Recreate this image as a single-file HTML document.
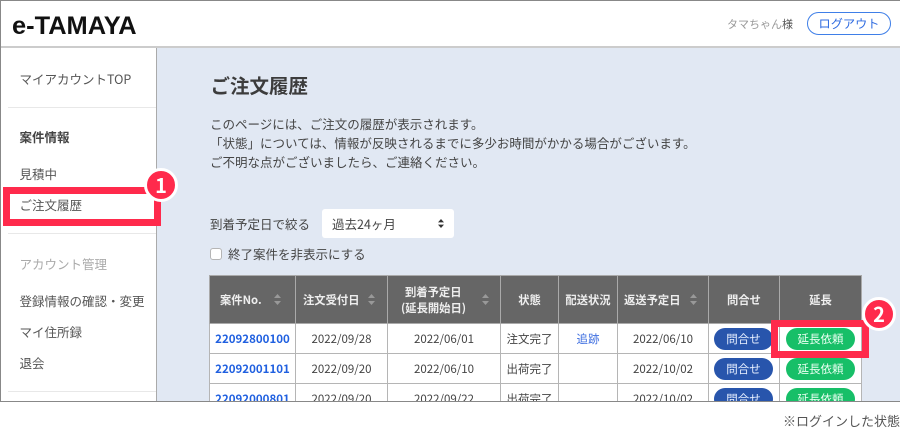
<!DOCTYPE html>
<html lang="ja"><head><meta charset="utf-8">
<style>
html,body{margin:0;padding:0;background:#fff}
body{width:900px;height:435px;position:relative;overflow:hidden;font-family:"Noto Sans CJK JP","Liberation Sans",sans-serif;color:#444}
.a{position:absolute;white-space:nowrap}
#frame{position:absolute;left:0;top:0;width:900px;height:402px;overflow:hidden;background:#fff}
#main{position:absolute;left:157px;top:48px;width:743px;height:354px;background:#e1e8f3}
.m{font-size:12.5px;line-height:19px;color:#444}
.hl{position:absolute;height:1px;background:#e8e8e8}
table{position:absolute;left:209px;top:275px;border-collapse:collapse;table-layout:fixed;width:652px;font-size:11.5px}
th{background:#666;color:#eee;font-weight:700;border:1px solid #aaa;height:48px;padding:0;font-size:11.3px;line-height:16px;position:relative;box-sizing:border-box}
td{background:#fff;border:1px solid #b5b5b5;height:30px;padding:0;text-align:center;color:#444;box-sizing:border-box;font-size:11.5px;line-height:16px}
td.n{font-weight:700;color:#2060e0;font-size:11.5px}
td.s{font-size:11.5px}
.srt{position:absolute;top:18px;width:7px;height:11px}
.b{display:block;border-radius:12px;font-size:11.5px;height:22px;line-height:22px;text-align:center}
.q{background:#2855ac;margin:0 6px 0 5px;color:#e8f0ff}
.e{background:#17bf68;margin:0 6px;color:#eafff2}
.badge{position:absolute;width:28px;height:28px;border-radius:50%;background:#ff2a4c;border:3px solid #fff;color:#fff;font-weight:700;font-size:20px;line-height:28px;text-align:center}
.nav{font-size:12.5px;line-height:20px;color:#555}
</style></head><body>
<div id="frame">
<div class="a" style="left:12px;top:11px;font-family:'Liberation Sans',sans-serif;font-size:25.4px;line-height:30px;font-weight:700;color:#111">e-TAMAYA</div>
<div class="a" style="left:727px;top:16px;font-size:11px;line-height:17px;color:#999">タマちゃん<span style="color:#555">様</span></div>
<div class="a" style="left:807px;top:12px;width:82px;height:21px;border:1px solid #3f7fe8;border-radius:13px;background:#fff;color:#2f6be0;font-size:12.2px;line-height:21px;text-align:center">ログアウト</div>
<div class="a" style="left:0;top:46px;width:900px;height:2px;background:#ccc"></div>
<div id="main"></div>
<div class="a" style="left:156px;top:48px;width:1px;height:354px;background:#aaa"></div>
<div class="a nav" style="left:19.5px;top:69px">マイアカウントTOP</div>
<div class="hl" style="left:8px;top:107px;width:148px"></div>
<div class="a nav" style="left:19.5px;top:127px;font-weight:700;color:#444">案件情報</div>
<div class="a nav" style="left:19.5px;top:164px">見積中</div>
<div class="a nav" style="left:19.5px;top:195px">ご注文履歴</div>
<div class="hl" style="left:8px;top:233px;width:148px"></div>
<div class="a nav" style="left:19.5px;top:254px;color:#aaa">アカウント管理</div>
<div class="a nav" style="left:19.5px;top:291px">登録情報の確認・変更</div>
<div class="a nav" style="left:19.5px;top:322px">マイ住所録</div>
<div class="a nav" style="left:19.5px;top:353px">退会</div>
<div class="hl" style="left:8px;top:391px;width:148px"></div>

<div class="a" style="left:210.5px;top:71px;font-size:19.5px;line-height:28px;font-weight:700;color:#3c3c3c">ご注文履歴</div>
<div class="a m" style="left:210px;top:114px">このページには、ご注文の履歴が表示されます。<br>「状態」については、情報が反映されるまでに多少お時間がかかる場合がございます。<br>ご不明な点がございましたら、ご連絡ください。</div>
<div class="a m" style="left:210px;top:214px">到着予定日で絞る</div>
<div class="a" style="left:322px;top:209px;width:132px;height:29px;background:#fff;border-radius:3px;font-size:12.5px;line-height:29px;color:#444"><span style="position:absolute;left:10px">過去24ヶ月</span>
<svg style="position:absolute;left:116px;top:10px" width="6" height="9"><path d="M0 3.4L3 0L6 3.4ZM0 5.6L3 9L6 5.6Z" fill="#333"/></svg></div>
<div class="a" style="left:209.5px;top:248px;width:10px;height:10px;background:#fff;border:1px solid #b5b5b5;border-radius:3px"></div>
<div class="a m" style="left:228px;top:244px">終了案件を非表示にする</div>

<table>
<colgroup><col style="width:86px"><col style="width:92px"><col style="width:113px"><col style="width:58px"><col style="width:59px"><col style="width:91px"><col style="width:71px"><col style="width:82px"></colgroup>
<tr>
<th style="text-align:left;padding-left:10px">案件No.<svg class="srt" style="left:64px" viewBox="0 0 7 11"><path d="M0 4L3.5 0L7 4ZM0 7L3.5 11L7 7Z" fill="#999"/></svg></th>
<th style="text-align:left;padding-left:7px">注文受付日<svg class="srt" style="left:72px" viewBox="0 0 7 11"><path d="M0 4L3.5 0L7 4ZM0 7L3.5 11L7 7Z" fill="#999"/></svg></th>
<th style="text-align:left;padding-left:17px">到着予定日<br><span style="margin-left:-4px">(延長開始日)</span><svg class="srt" style="left:94px" viewBox="0 0 7 11"><path d="M0 4L3.5 0L7 4ZM0 7L3.5 11L7 7Z" fill="#999"/></svg></th>
<th>状態</th>
<th>配送状況</th>
<th style="text-align:left;padding-left:6px">返送予定日<svg class="srt" style="left:72px" viewBox="0 0 7 11"><path d="M0 4L3.5 0L7 4ZM0 7L3.5 11L7 7Z" fill="#999"/></svg></th>
<th>問合せ</th>
<th>延長</th>
</tr>
<tr><td class="n">22092800100</td><td>2022/09/28</td><td>2022/06/01</td><td class="s">注文完了</td><td class="s" style="color:#3f6fe0">追跡</td><td>2022/06/10</td><td><span class="b q">問合せ</span></td><td><span class="b e">延長依頼</span></td></tr>
<tr><td class="n">22092001101</td><td>2022/09/20</td><td>2022/06/10</td><td class="s">出荷完了</td><td></td><td>2022/10/02</td><td><span class="b q">問合せ</span></td><td><span class="b e">延長依頼</span></td></tr>
<tr><td class="n">22092000801</td><td>2022/09/20</td><td>2022/09/22</td><td class="s">出荷完了</td><td></td><td>2022/10/02</td><td><span class="b q">問合せ</span></td><td><span class="b e">延長依頼</span></td></tr>
</table>

<div class="a" style="left:3px;top:187px;width:144px;height:25px;border:7px solid #ff2a4c"></div>
<div class="badge" style="left:144px;top:168px">1</div>
<div class="a" style="left:771px;top:320px;width:84px;height:24px;border:7px solid #ff2a4c"></div>
<div class="badge" style="left:862px;top:297px">2</div>
</div>
<div class="a" style="left:0;top:0;width:900px;height:1px;background:#888"></div>
<div class="a" style="left:0;top:0;width:1px;height:402px;background:#888"></div>
<div class="a" style="left:0;top:401px;width:900px;height:1px;background:#888"></div>
<div class="a" style="left:783px;top:412px;font-size:13px;line-height:18px;color:#555">※ログインした状態</div>
</body></html>
